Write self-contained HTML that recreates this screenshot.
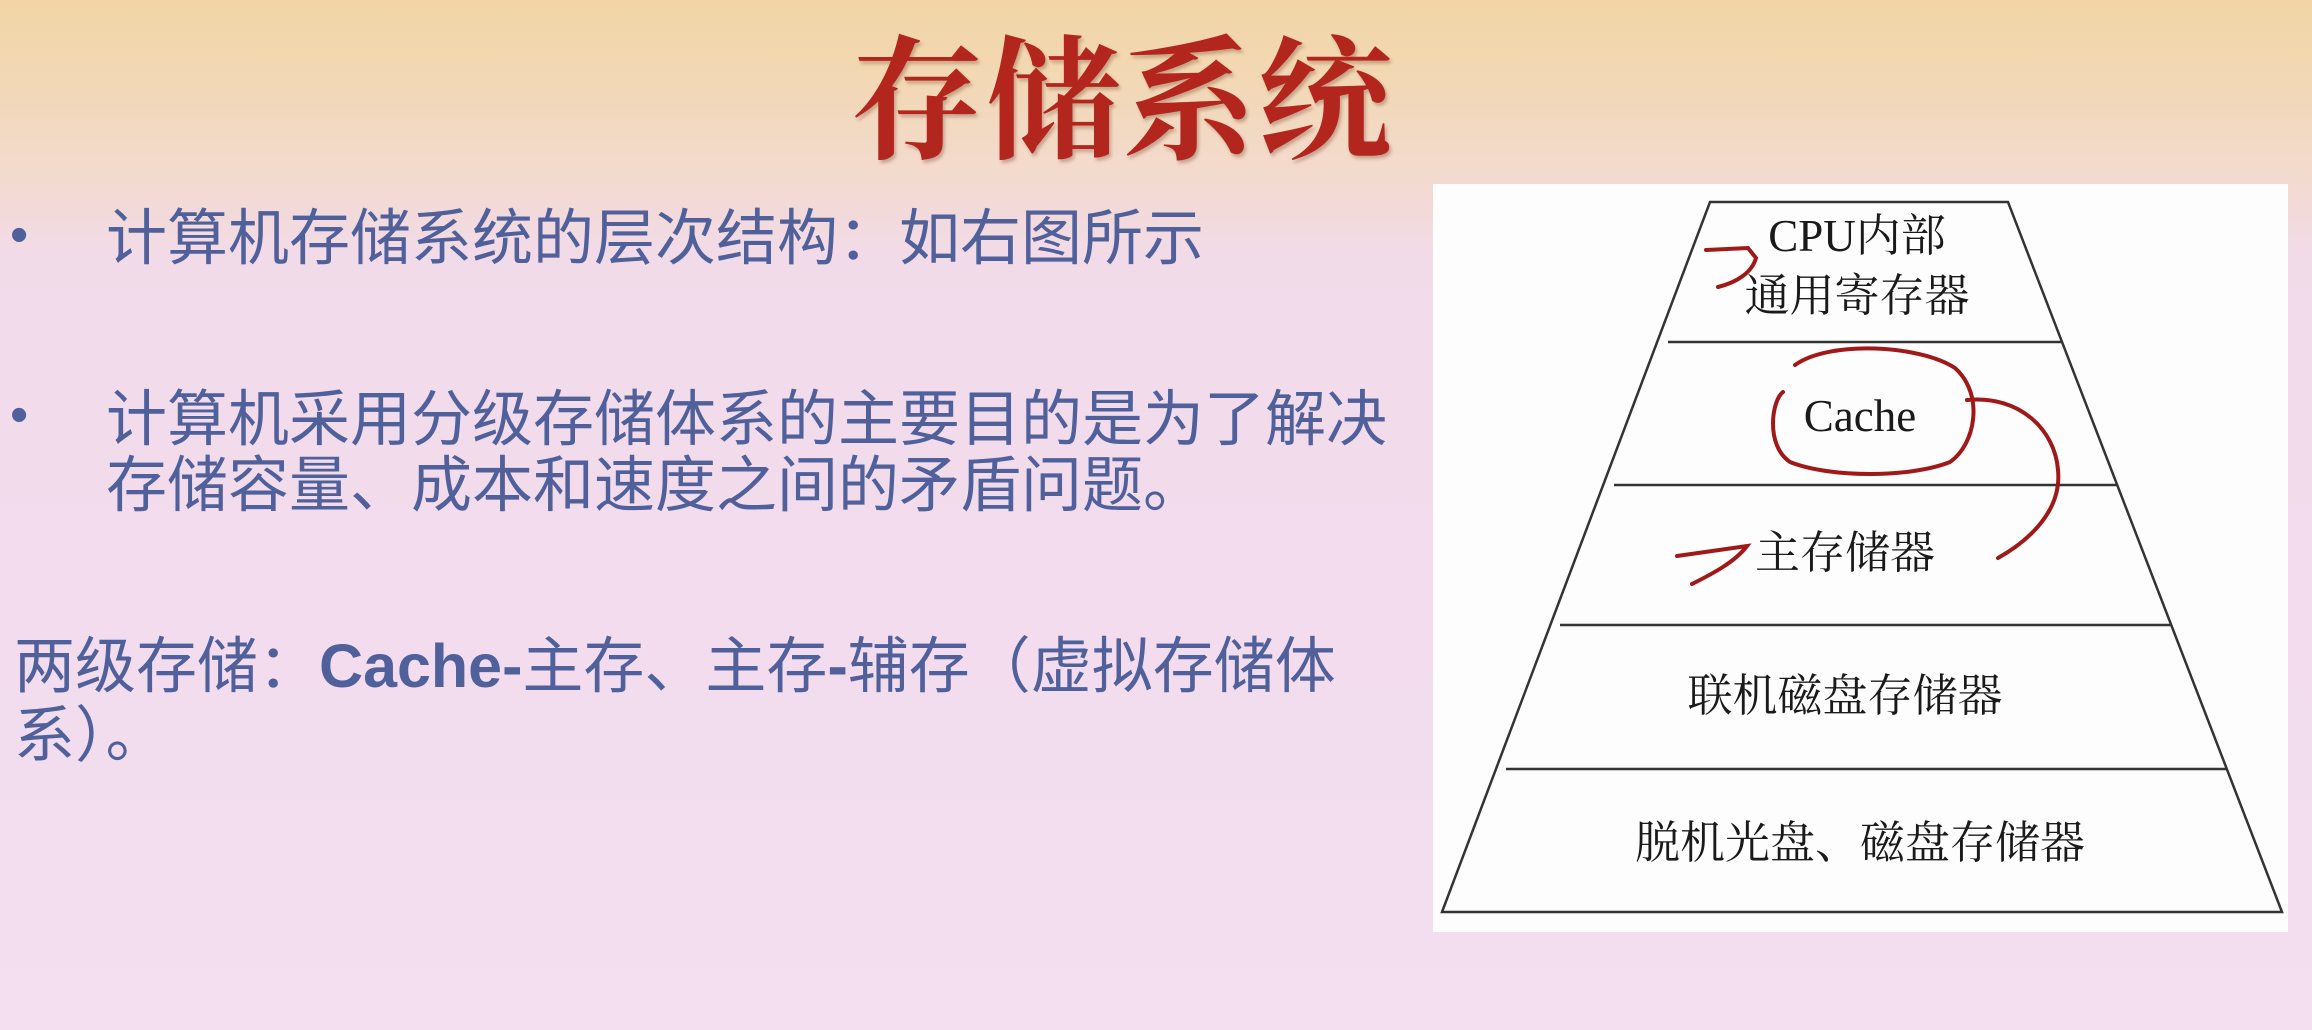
<!DOCTYPE html>
<html><head><meta charset="utf-8"><style>
html,body{margin:0;padding:0}
body{width:2312px;height:1030px;overflow:hidden;position:relative;
background:linear-gradient(180deg,#f1d5a6 0px,#f2d8b4 80px,#f3dacd 170px,#f2dbe9 260px,#f2dcee 600px,#f3dff0 1030px);
font-family:"Liberation Sans","Noto Sans CJK SC",sans-serif;}
.t{position:absolute;white-space:nowrap;color:#50609a;font-size:61px;line-height:66px;}
h1{position:absolute;left:850px;top:16px;margin:0;font-size:134px;line-height:150px;font-weight:700;color:#b3261e;
font-family:"Noto Serif CJK SC","WenQuanYi Zen Hei",serif;letter-spacing:2px;text-shadow:2px 3px 3px rgba(120,60,40,.35);}
.dot{position:absolute;font-size:52px;color:#50609a}
</style></head><body>
<h1>存储系统</h1>
<div class="dot" style="left:10px;top:205px">•</div>
<div class="t" style="left:106px;top:205px">计算机存储系统的层次结构：如右图所示</div>
<div class="dot" style="left:10px;top:385px">•</div>
<div class="t" style="left:106px;top:386px">计算机采用分级存储体系的主要目的是为了解决</div>
<div class="t" style="left:106px;top:452px">存储容量、成本和速度之间的矛盾问题。</div>
<div class="t" style="left:14px;top:633px">两级存储：<b>Cache-</b>主存、主存<b>-</b>辅存（虚拟存储体</div>
<div class="t" style="left:14px;top:702px">系）。</div>
<svg style="position:absolute;left:0;top:0" width="2312" height="1030">
<rect x="1433" y="184" width="855" height="748" fill="#fdfdfd"/>
<g stroke="#333" stroke-width="2.5" fill="none">
<polygon points="1710,202 2008,202 2282,912 1442,912"/>
<line x1="1668" y1="342" x2="2062" y2="342"/>
<line x1="1614" y1="485" x2="2117" y2="485"/>
<line x1="1560" y1="625" x2="2171" y2="625"/>
<line x1="1506" y1="769" x2="2227" y2="769"/>
</g>
<g font-family="Liberation Serif,'Noto Serif CJK SC',serif" font-size="45" fill="#1a1a1a" text-anchor="middle">
<text x="1857" y="251">CPU内部</text>
<text x="1857" y="311">通用寄存器</text>
<text x="1860" y="431">Cache</text>
<text x="1845" y="568">主存储器</text>
<text x="1845" y="711">联机磁盘存储器</text>
<text x="1860" y="858">脱机光盘、磁盘存储器</text>
</g>
<g stroke="#a01818" stroke-width="4" fill="none" stroke-linecap="round">
<path d="M1795,365 C1830,340 1920,345 1955,368 C1985,395 1975,445 1950,462 C1910,478 1830,478 1790,462 C1765,445 1772,400 1783,392"/>
<path d="M1967,400 C2020,395 2055,430 2058,470 C2062,510 2030,540 1998,558"/>
<path d="M1706,250 L1748,248 L1756,258 C1752,272 1738,282 1718,287"/>
<path d="M1677,556 L1747,546 C1735,562 1712,574 1692,584"/>
</g>
</svg>
</body></html>
